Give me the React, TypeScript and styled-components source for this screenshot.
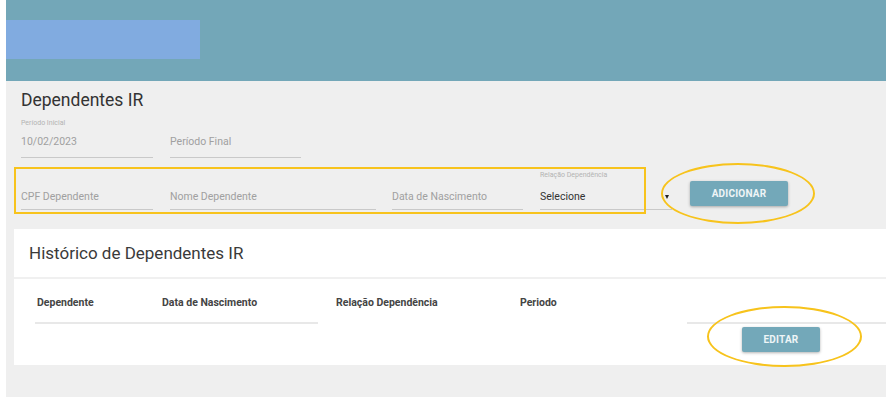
import React from 'react';
import styled, { createGlobalStyle } from 'styled-components';

const GlobalStyle = createGlobalStyle`
  html, body {
    margin: 0;
    padding: 0;
    background: #ffffff;
    font-family: Roboto, "Liberation Sans", Arial, sans-serif;
  }
`;

const Page = styled.div`
  position: relative;
  margin-left: 6px;
  height: 397px;
  background: #efefef;
  overflow: hidden;
`;

const Header = styled.header`
  height: 81px;
  padding-top: 20px;
  box-sizing: border-box;
  background: #73a7b8;
`;

const Logo = styled.div`
  width: 194px;
  height: 39px;
  background: #81abe0;
`;

const Content = styled.main`
  padding-left: 8px;
`;

const FormSection = styled.section`
  padding-left: 7px;
`;

const Title = styled.h1`
  margin: 8px 0 0;
  font-size: 17.5px;
  line-height: 22px;
  font-weight: 400;
  color: #333;
`;

const Row = styled.div<{ $top: number }>`
  display: flex;
  align-items: flex-end;
  margin-top: ${({ $top }) => $top}px;
`;

const Field = styled.div<{ $width: number; $gap?: number; $pad?: number }>`
  width: ${({ $width }) => $width}px;
  margin-right: ${({ $gap }) => $gap ?? 17}px;
  border-bottom: 1px solid #c9c9c9;
  padding-bottom: ${({ $pad }) => $pad ?? 8}px;
  position: relative;
`;

const Label = styled.div`
  height: 10px;
  font-size: 7px;
  line-height: 10px;
  color: #b3b3b3;
`;

const Value = styled.div<{ $dark?: boolean; $offset?: number }>`
  margin-top: ${({ $offset }) => $offset ?? 7}px;
  font-size: 10.5px;
  line-height: 14px;
  color: ${({ $dark }) => ($dark ? '#333' : '#a0a0a0')};
`;

const Caret = styled.span`
  position: absolute;
  right: 3px;
  bottom: 10px;
  width: 0;
  height: 0;
  border-left: 2.5px solid transparent;
  border-right: 2.5px solid transparent;
  border-top: 4px solid #222;
`;

const Button = styled.button<{ $width: number }>`
  width: ${({ $width }) => $width}px;
  height: 25px;
  border: none;
  border-radius: 2px;
  background: #73a8b9;
  color: #eef5f7;
  font-family: Roboto, "Liberation Sans", Arial, sans-serif;
  font-size: 10px;
  font-weight: 700;
  letter-spacing: 0.2px;
  box-shadow: 0 1px 3px rgba(0, 0, 0, 0.3);
  padding: 0;
`;

const AddButton = styled(Button)`
  margin-left: 1px;
  margin-bottom: 4px;
`;

const Card = styled.section`
  margin-top: 19px;
  background: #ffffff;
  padding-bottom: 13px;
`;

const CardHeader = styled.div`
  height: 48px;
  display: flex;
  align-items: center;
  padding-left: 15px;
  border-bottom: 2px solid #f0f0f0;
`;

const CardTitle = styled.h2`
  margin: 0;
  font-size: 17px;
  font-weight: 400;
  color: #3a3a3a;
`;

const TableHead = styled.div`
  display: grid;
  grid-template-columns: 125px 174px 184px 1fr;
  padding: 18px 0 0 23px;
  font-size: 10.5px;
  line-height: 12px;
  font-weight: 700;
  color: #444;
`;

const RuleRow = styled.div`
  display: flex;
  margin-top: 13px;
  padding-left: 21px;
`;

const Rule = styled.div<{ $width: number }>`
  width: ${({ $width }) => $width}px;
  height: 2px;
  background: #e8e8e8;
`;

const Spacer = styled.div`
  flex: 1;
`;

const Actions = styled.div`
  display: flex;
  justify-content: flex-end;
  padding-right: 66px;
  margin-top: 3px;
`;

const Highlight = styled.div<{ $x: number; $y: number; $w: number; $h: number; $round?: boolean }>`
  position: absolute;
  left: ${({ $x }) => $x}px;
  top: ${({ $y }) => $y}px;
  width: ${({ $w }) => $w}px;
  height: ${({ $h }) => $h}px;
  box-sizing: border-box;
  border: 2px solid #f7c31c;
  border-radius: ${({ $round }) => ($round ? '50%' : '0')};
  pointer-events: none;
`;

function App() {
  return (
    <>
      <GlobalStyle />
      <Page>
        <Header>
          <Logo />
        </Header>
        <Content>
          <FormSection>
            <Title>Dependentes IR</Title>
            <Row $top={7}>
              <Field $width={132}>
                <Label>Período Inicial</Label>
                <Value>10/02/2023</Value>
              </Field>
              <Field $width={131}>
                <Label />
                <Value>Período Final</Value>
              </Field>
            </Row>
            <Row $top={12}>
              <Field $width={132} $pad={5}>
                <Label />
                <Value $offset={10}>CPF Dependente</Value>
              </Field>
              <Field $width={206} $gap={16} $pad={5}>
                <Label />
                <Value $offset={10}>Nome Dependente</Value>
              </Field>
              <Field $width={131} $pad={5}>
                <Label />
                <Value $offset={10}>Data de Nascimento</Value>
              </Field>
              <Field $width={132} $pad={5}>
                <Label>Relação Dependência</Label>
                <Value $dark $offset={10}>Selecione</Value>
                <Caret />
              </Field>
              <AddButton $width={98}>ADICIONAR</AddButton>
            </Row>
          </FormSection>
          <Card>
            <CardHeader>
              <CardTitle>Histórico de Dependentes IR</CardTitle>
            </CardHeader>
            <TableHead>
              <span>Dependente</span>
              <span>Data de Nascimento</span>
              <span>Relação Dependência</span>
              <span>Periodo</span>
            </TableHead>
            <RuleRow>
              <Rule $width={283} />
              <Spacer />
              <Rule $width={199} />
            </RuleRow>
            <Actions>
              <Button $width={78}>EDITAR</Button>
            </Actions>
          </Card>
        </Content>
        <Highlight $x={8} $y={167} $w={632} $h={47} />
        <Highlight $x={655} $y={163} $w={154} $h={61} $round />
        <Highlight $x={701} $y={306} $w={155} $h={61} $round />
      </Page>
    </>
  );
}

export default App;
